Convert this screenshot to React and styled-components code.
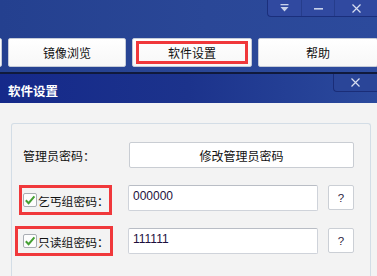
import React from "react";
import styled, { createGlobalStyle } from "styled-components";

const GlobalStyle = createGlobalStyle`
  html, body {
    margin: 0;
    padding: 0;
    width: 377px;
    height: 276px;
    overflow: hidden;
    background: #f3f3f3;
  }
  * { box-sizing: border-box; }
`;

const CN = `"Noto Sans CJK SC", "Liberation Sans", sans-serif`;

const Screen = styled.div`
  width: 377px;
  height: 276px;
  overflow: hidden;
  font-family: ${CN};
  display: flex;
  flex-direction: column;
  & > * {
    flex-shrink: 0;
  }
`;

const TopArea = styled.div`
  height: 72px;
  background: linear-gradient(90deg, #24408f 0%, #2a4797 55%, #2c4a9c 100%);
  display: flex;
  flex-direction: column;
`;

const ControlBar = styled.div`
  display: flex;
  justify-content: flex-end;
  height: 17px;
`;

const ControlGroup = styled.div`
  display: flex;
  background: #3049a0;
  border-left: 1px solid #1b2f7c;
  border-bottom: 1px solid #1b2f7c;
  border-bottom-left-radius: 4px;
`;

const ControlButton = styled.div`
  width: ${(p) => p.$w}px;
  height: 16px;
  display: flex;
  align-items: center;
  justify-content: center;
  border-left: ${(p) => (p.$first ? "none" : "1px solid #263d8c")};
`;

const NavRow = styled.div`
  display: flex;
  gap: 6px;
  margin-top: 21px;
  margin-left: -116px;
`;

const NavButton = styled.div`
  flex: 0 0 ${(p) => p.$w}px;
  height: 29px;
  background: linear-gradient(#ffffff, #f7f7f7);
  border: 1px solid #c5cbd8;
  border-radius: 2px;
  display: flex;
  align-items: center;
  justify-content: center;
  font-size: 12px;
  color: #111;
  padding: 2px 3px;
`;

const Marked = styled.div`
  width: 100%;
  height: 100%;
  border: 3px solid #f0383b;
  display: flex;
  align-items: center;
  justify-content: center;
`;

const Divider = styled.div`
  height: 2px;
  background: #101a3c;
`;

const DialogHeader = styled.div`
  height: 29px;
  background: linear-gradient(90deg, #15298a 0%, #1c338c 50%, #2b4a9d 100%);
  display: flex;
  justify-content: space-between;
  align-items: flex-start;
`;

const DialogTitle = styled.div`
  color: #ffffff;
  font-weight: bold;
  font-size: 12.5px;
  padding: 7px 0 0 8px;
`;

const CloseBox = styled.div`
  width: 44px;
  height: 18px;
  display: flex;
  align-items: center;
  justify-content: center;
  background: #2a4598;
  border-left: 1px solid #1a2d78;
  border-bottom: 1px solid #1a2d78;
  border-bottom-left-radius: 4px;
`;

const DialogBody = styled.div`
  flex: 1;
  background: #f3f3f3;
  padding: 20px 6px 0 11px;
`;

const GroupBox = styled.div`
  border: 1px solid #d3dde6;
  border-bottom: none;
  border-radius: 3px 3px 0 0;
  height: 200px;
  padding: 18px 0 0 11px;
  display: grid;
  grid-template-columns: 95px 190px 26px;
  grid-auto-rows: 26px;
  column-gap: 10px;
  row-gap: 17px;
  align-content: start;
`;

const Label = styled.div`
  display: flex;
  align-items: center;
  font-size: 12px;
  color: #111;
  white-space: nowrap;
`;

const Highlight = styled.div`
  display: flex;
  align-items: center;
  gap: 1px;
  border: 3px solid #f0383b;
  margin-left: ${(p) => -p.$pad - 3}px;
  padding-left: ${(p) => p.$pad}px;
  padding-right: ${(p) => p.$right}px;
  height: ${(p) => p.$h}px;
  align-self: ${(p) => p.$align};
  font-size: 11.8px;
  color: #111;
  white-space: nowrap;
  justify-self: start;
`;

const WideButton = styled.div`
  grid-column: 2 / span 2;
  margin-left: 1px;
  background: #ffffff;
  border: 1px solid #c9cdd3;
  border-radius: 2px;
  display: flex;
  align-items: center;
  justify-content: center;
  font-size: 12px;
  color: #111;
`;

const TextInput = styled.div`
  background: #ffffff;
  border: 1px solid #cfd3da;
  border-top-color: #b9bdc5;
  border-radius: 2px;
  font-family: "Liberation Sans", sans-serif;
  font-size: 12px;
  color: #1c0f3d;
  padding: 3px 0 0 4px;
`;

const HelpButton = styled.div`
  background: #ffffff;
  border: 1px solid #cbcfd5;
  border-radius: 2px;
  display: flex;
  align-items: center;
  justify-content: center;
  font-family: "Liberation Sans", sans-serif;
  font-size: 11.5px;
  color: #2a2440;
  height: 25px;
`;

const Check = styled.span`
  width: 14px;
  height: 14px;
  background: #fdfdfd;
  border: 1px solid #a9adb3;
  border-radius: 2px;
  display: inline-flex;
  align-items: center;
  justify-content: center;
`;

const CheckBox = () => (
  <Check>
    <svg width="12" height="12" viewBox="0 0 12 12">
      <path d="M1.8 6.2 L4.6 9.2 L10.4 2.4" fill="none" stroke="#45a033" strokeWidth="2" />
    </svg>
  </Check>
);

const Xmark = ({ size = 9, color = "#d7def0" }) => (
  <svg width={size} height={size} viewBox="0 0 9 9">
    <path d="M0.5 0.5 L8.5 8.5 M8.5 0.5 L0.5 8.5" stroke={color} strokeWidth="1.2" />
  </svg>
);

export default function App() {
  return (
    <Screen>
      <GlobalStyle />
      <TopArea>
        <ControlBar>
          <ControlGroup>
            <ControlButton $w={33} $first>
              <svg width="9" height="8" viewBox="0 0 9 8">
                <rect x="0.5" y="0" width="8" height="1.3" fill="#c9d2ea" />
                <path d="M0.5 3 L8.5 3 L4.5 7.5 Z" fill="#c9d2ea" />
              </svg>
            </ControlButton>
            <ControlButton $w={33}>
              <svg width="9" height="4" viewBox="0 0 9 4">
                <rect x="0" y="2" width="9" height="1.6" fill="#c9d2ea" />
              </svg>
            </ControlButton>
            <ControlButton $w={43}>
              <Xmark />
            </ControlButton>
          </ControlGroup>
        </ControlBar>
        <NavRow>
          <NavButton $w={118} />
          <NavButton $w={118}>镜像浏览</NavButton>
          <NavButton $w={120}>
            <Marked>软件设置</Marked>
          </NavButton>
          <NavButton $w={120}>帮助</NavButton>
        </NavRow>
      </TopArea>
      <Divider />
      <DialogHeader>
        <DialogTitle>软件设置</DialogTitle>
        <CloseBox>
          <Xmark />
        </CloseBox>
      </DialogHeader>
      <DialogBody>
        <GroupBox>
          <Label>管理员密码：</Label>
          <WideButton>修改管理员密码</WideButton>

          <Highlight $pad={1} $right={0} $h={30} $align="start">
            <CheckBox />
            乞丐组密码：
          </Highlight>
          <TextInput>000000</TextInput>
          <HelpButton>?</HelpButton>

          <Highlight $pad={5} $right={1} $h={30} $align="center">
            <CheckBox />
            只读组密码：
          </Highlight>
          <TextInput>111111</TextInput>
          <HelpButton>?</HelpButton>
        </GroupBox>
      </DialogBody>
    </Screen>
  );
}
